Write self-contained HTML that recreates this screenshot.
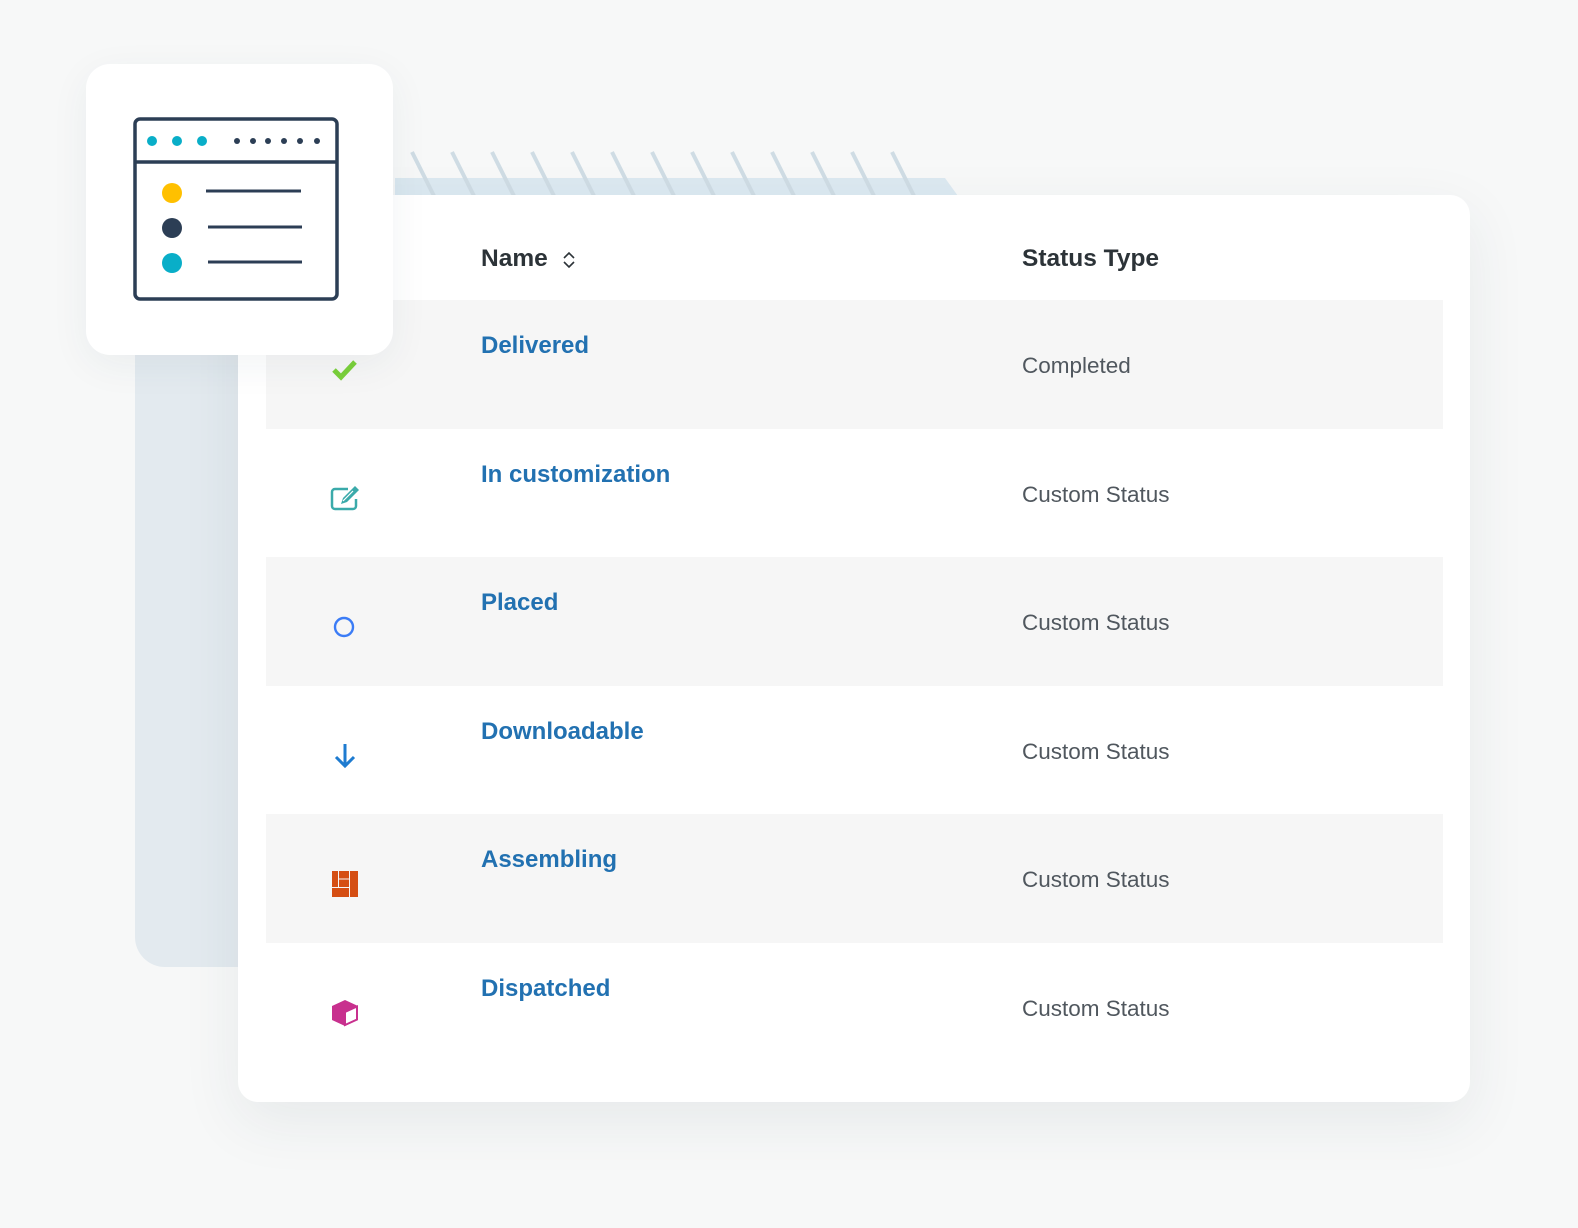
<!DOCTYPE html>
<html><head><meta charset="utf-8"><style>
*{margin:0;padding:0;box-sizing:border-box}
body{width:1578px;height:1228px;background:#f7f8f8;position:relative;overflow:hidden;font-family:"Liberation Sans",sans-serif}
.back{position:absolute;left:135px;top:170px;width:200px;height:797px;background:#e3eaef;border-radius:0 0 0 30px}
.card{position:absolute;left:238px;top:195px;width:1232px;height:907px;background:#fff;border-radius:20px;box-shadow:0 20px 60px rgba(40,60,80,0.08)}
.row{position:absolute;left:28px;width:1177px;height:129px}
.row.g{background:#f6f6f6}
.nm{position:absolute;left:215px;top:32px;font-size:24px;font-weight:bold;color:#2271b1}
.st{position:absolute;left:756px;top:53px;font-size:22.5px;color:#50575e}
.ic{position:absolute;left:62px;top:52px;width:34px;height:34px}
.hdr{position:absolute;top:50px;font-size:24.5px;font-weight:bold;color:#2c3338}
.icard{position:absolute;left:86px;top:64px;width:307px;height:291px;background:#fff;border-radius:24px;box-shadow:0 10px 40px rgba(40,60,80,0.06)}
</style></head><body>
<div class="back"></div>
<svg style="position:absolute;left:390px;top:148px" width="580" height="50">
<polygon points="5,30 555,30 568,48 5,48" fill="#dce9f1"/>
<g stroke="#cfdce4" stroke-width="4">
<line x1="22" y1="4" x2="44" y2="48"/><line x1="62" y1="4" x2="84" y2="48"/><line x1="102" y1="4" x2="124" y2="48"/><line x1="142" y1="4" x2="164" y2="48"/><line x1="182" y1="4" x2="204" y2="48"/><line x1="222" y1="4" x2="244" y2="48"/><line x1="262" y1="4" x2="284" y2="48"/><line x1="302" y1="4" x2="324" y2="48"/><line x1="342" y1="4" x2="364" y2="48"/><line x1="382" y1="4" x2="404" y2="48"/><line x1="422" y1="4" x2="444" y2="48"/><line x1="462" y1="4" x2="484" y2="48"/><line x1="502" y1="4" x2="524" y2="48"/>
</g></svg>
<div class="card">
<div class="hdr" style="left:243px">Name <svg width="16" height="22" viewBox="0 0 16 22" style="vertical-align:middle;margin-left:6px"><path d="M3 9 L8 4 L13 9 M3 13 L8 18 L13 13" fill="none" stroke="#2c3338" stroke-width="1.6"/></svg></div>
<div class="hdr" style="left:784px">Status Type</div>
<div class="row g" style="top:105px"><svg class="ic" viewBox="0 0 34 34"><path d="M6 18 L13 25 L27 10" fill="none" stroke="#7ad03a" stroke-width="5"/></svg><div class="nm">Delivered</div><div class="st">Completed</div></div>
<div class="row" style="top:234px"><svg class="ic" viewBox="0 0 34 34"><path d="M20 8 H7 a3 3 0 0 0 -3 3 V25 a3 3 0 0 0 3 3 H25 a3 3 0 0 0 3 -3 V18" fill="none" stroke="#3aaaaa" stroke-width="2.5"/><path d="M13 23 L15 17 L27 5 L31 9 L19 21 Z" fill="#3aaaaa"/><path d="M15 20 L25 10" stroke="#fff" stroke-width="1.2"/></svg><div class="nm">In customization</div><div class="st">Custom Status</div></div>
<div class="row g" style="top:362px"><svg class="ic" viewBox="0 0 34 34"><circle cx="16" cy="18" r="9" fill="none" stroke="#3b7cf6" stroke-width="2.4"/></svg><div class="nm">Placed</div><div class="st">Custom Status</div></div>
<div class="row" style="top:491px"><svg class="ic" viewBox="0 0 34 34"><path d="M17 6 V27 M8 19 L17 28 L26 19" fill="none" stroke="#1e7bd0" stroke-width="3"/></svg><div class="nm">Downloadable</div><div class="st">Custom Status</div></div>
<div class="row g" style="top:619px"><svg class="ic" viewBox="0 0 34 34"><g fill="#d54e13"><rect x="4" y="5" width="6" height="16"/><rect x="11" y="5" width="10" height="7.5"/><rect x="11" y="13.5" width="10" height="7.5"/><rect x="4" y="22" width="17" height="9"/><rect x="22" y="5" width="8" height="26"/></g></svg><div class="nm">Assembling</div><div class="st">Custom Status</div></div>
<div class="row" style="top:748px"><svg class="ic" viewBox="0 0 34 34"><path d="M17 5 L30 11 V25 L17 31 L4 25 V11 Z" fill="#c8308e"/><path d="M17 17 L29 11.5 V24.5 L17 30 Z" fill="#fff" stroke="#c8308e" stroke-width="2"/></svg><div class="nm">Dispatched</div><div class="st">Custom Status</div></div>
</div>
<div class="icard">
<svg style="position:absolute;left:47px;top:53px" width="210" height="186" viewBox="0 0 210 186">
<rect x="2" y="2" width="202" height="180" rx="5" fill="#fff" stroke="#2c3e55" stroke-width="3.5"/>
<line x1="2" y1="45" x2="204" y2="45" stroke="#2c3e55" stroke-width="3.5"/>
<circle cx="19" cy="24" r="5" fill="#09aec8"/><circle cx="44" cy="24" r="5" fill="#09aec8"/><circle cx="69" cy="24" r="5" fill="#09aec8"/>
<g fill="#2c3e55"><circle cx="104" cy="24" r="3"/><circle cx="120" cy="24" r="3"/><circle cx="135" cy="24" r="3"/><circle cx="151" cy="24" r="3"/><circle cx="167" cy="24" r="3"/><circle cx="184" cy="24" r="3"/></g>
<circle cx="39" cy="76" r="10" fill="#ffc000"/><circle cx="39" cy="111" r="10" fill="#2c3e55"/><circle cx="39" cy="146" r="10" fill="#09aec8"/>
<g stroke="#2c3e55" stroke-width="3"><line x1="73" y1="74" x2="168" y2="74"/><line x1="75" y1="110" x2="169" y2="110"/><line x1="75" y1="145" x2="169" y2="145"/></g>
</svg></div>
</body></html>
